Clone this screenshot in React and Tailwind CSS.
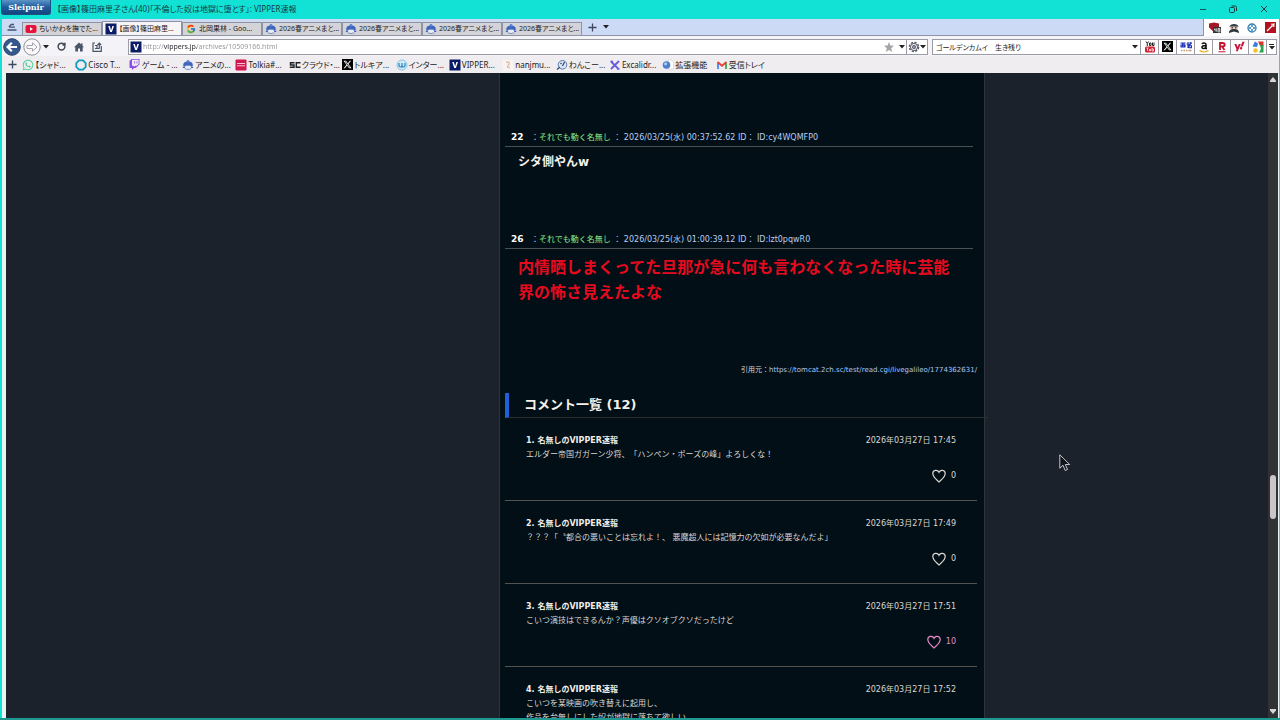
import React, { useState } from "react";
import { FaXTwitter, FaWhatsapp, FaTwitch, FaYahoo } from "react-icons/fa6";
import { FcGoogle } from "react-icons/fc";
import { RotateCw } from "lucide-react";

const TABS = [
  { icon: "youtube", title: "ちいかわを撫でた..." },
  { icon: "vipper", title: "【画像】篠田麻里...", active: true },
  { icon: "google", title: "北岡果林 - Goo..." },
  { icon: "anime", title: "2026春アニメまと..." },
  { icon: "anime", title: "2026春アニメまと..." },
  { icon: "anime", title: "2026春アニメまと..." },
  { icon: "anime", title: "2026春アニメまと..." },
];

const BOOKMARKS = [
  { icon: "whatsapp", title: "【シャド..." },
  { icon: "cisco", title: "Cisco T..." },
  { icon: "twitch", title: "ゲーム - ..." },
  { icon: "anime", title: "アニメの..." },
  { icon: "tolkia", title: "Tolkia#..." },
  { icon: "sc", title: "クラウド・..." },
  { icon: "x", title: "トルキア..." },
  { icon: "inter", title: "インター..." },
  { icon: "vipper", title: "VIPPER..." },
  { icon: "nanj", title: "nanjmu..." },
  { icon: "wanko", title: "わんこー..." },
  { icon: "excalidraw", title: "Excalidr..." },
  { icon: "globe", title: "拡張機能" },
  { icon: "gmail", title: "受信トレイ" },
];

const ENGINES = ["yt", "x", "kakaku", "amazon", "rakuten", "yahoo", "gsearch"];

const POSTS = [
  { no: 22, date: "2026/03/25(水) 00:37:52.62 ID： ID:cy4WQMFP0", text: "シタ側やんw" },
  {
    no: 26,
    date: "2026/03/25(水) 01:00:39.12 ID： ID:lzt0pqwR0",
    text: "内情晒しまくってた旦那が急に何も言わなくなった時に芸能界の怖さ見えたよな",
    big: true,
  },
];

const COMMENTS = [
  { id: 1, time: "17:45", likes: 0, lines: ["エルダー帝国ガガーン少将、「ハンペン・ポーズの峰」よろしくな！"] },
  { id: 2, time: "17:49", likes: 0, lines: ["？？？「〝都合の悪いことは忘れよ！、 悪魔超人には記憶力の欠如が必要なんだよ」"] },
  { id: 3, time: "17:51", likes: 10, lines: ["こいつ演技はできるんか？声優はクソオブクソだったけど"] },
  { id: 4, time: "17:52", likes: 0, lines: ["こいつを某映画の吹き替えに起用し、", "作品を台無しにした奴が地獄に落ちて欲しい"] },
];

const Icon = ({ name }) => {
  switch (name) {
    case "youtube":
      return (
        <svg viewBox="0 0 12 12" className="size-3 shrink-0">
          <rect x="0.5" y="2" width="11" height="8" rx="2" fill="#e8103c" />
          <path d="M5 4.2 8 6 5 7.8z" fill="#fff" />
        </svg>
      );
    case "vipper":
      return (
        <svg viewBox="0 0 12 12" className="size-3 shrink-0">
          <rect x="0.5" y="0.5" width="11" height="11" fill="#0b1c66" />
          <path d="M3.2 3h1.6L6.1 7.2 7.4 3H9L6.9 9H5.2z" fill="#fff" />
        </svg>
      );
    case "google":
      return <FcGoogle className="size-[10px] mx-px shrink-0" />;
    case "anime":
      return (
        <svg viewBox="0 0 12 12" className="size-3 shrink-0">
          <path d="M1.5 7.5C.3 3.8 3.4 2.6 6 2.6s5.7 1.2 4.5 4.9z" fill="#3f66bd" />
          <circle cx="6" cy="2.3" r="1.4" fill="#5b83d6" />
          <path d="M2.4 8.2c0-2.6 7.2-2.6 7.2 0 0 3-7.2 3-7.2 0z" fill="#e7ecf6" stroke="#5a7ab8" strokeWidth="0.8" />
          <path d="M.8 8.3h2M9.2 8.3h2" stroke="#3f66bd" strokeWidth="1.2" />
        </svg>
      );
    case "whatsapp":
      return <FaWhatsapp className="size-3 shrink-0 text-[#45cf95]" />;
    case "cisco":
      return (
        <svg viewBox="0 0 12 12" className="size-3 shrink-0">
          <path d="M4 1.3h4L10.7 4v4L8 10.7H4L1.3 8V4z" fill="none" stroke="#0f9bc4" strokeWidth="1.8" />
        </svg>
      );
    case "twitch":
      return <FaTwitch className="size-[11px] mr-px shrink-0 text-[#8d4ae8]" />;
    case "tolkia":
      return (
        <svg viewBox="0 0 12 12" className="size-3 shrink-0">
          <rect x="0.5" y="0.5" width="11" height="11" rx="1" fill="#d3174f" />
          <path d="M2 4.5h8M2 6.8h8" stroke="#f7c4d3" />
        </svg>
      );
    case "sc":
      return (
        <svg viewBox="0 0 12 12" className="size-3 shrink-0">
          <path d="M5.5 3.8H1.5V6H5v2.3H.8M11.5 3.8H7.3v4.5h4.2" fill="none" stroke="#222" strokeWidth="1.4" />
        </svg>
      );
    case "x":
      return (
        <span className="flex size-[11px] shrink-0 items-center justify-center bg-black text-white">
          <FaXTwitter className="size-[9px]" />
        </span>
      );
    case "inter":
      return (
        <svg viewBox="0 0 12 12" className="size-3 shrink-0">
          <circle cx="6" cy="6" r="5" fill="#d4ebf7" stroke="#8cc3e2" />
          <path d="M3 4v2.5c0 2 3 2 3 0V4v2.5c0 2 3 2 3 0V4" fill="none" stroke="#2483c0" strokeWidth="1.2" />
        </svg>
      );
    case "nanj":
      return (
        <svg viewBox="0 0 12 12" className="size-3 shrink-0">
          <rect x="0.5" y="0.5" width="11" height="11" fill="#f8f4f1" />
          <path d="M4 3.5c3-1.5 4 1 2.5 2.5S5 9 8 8.5" fill="none" stroke="#e5b79f" strokeWidth="1.3" />
        </svg>
      );
    case "wanko":
      return (
        <svg viewBox="0 0 12 12" className="size-3 shrink-0">
          <circle cx="6.5" cy="5.8" r="4.3" fill="#dbe6f7" stroke="#587ab3" />
          <path d="M1 10.5 4 8M8.5 3 6.5 7" stroke="#33456b" strokeWidth="1.2" />
          <circle cx="5" cy="4.5" r="0.8" fill="#33456b" />
        </svg>
      );
    case "excalidraw":
      return (
        <svg viewBox="0 0 12 12" className="size-3 shrink-0">
          <path d="M2 2.5 9.5 10M10 2 2 10" stroke="#6b5bdb" strokeWidth="1.8" />
          <path d="M1.5 2.2 4 2.5M8 9.8l2.5.2" stroke="#6b5bdb" strokeWidth="1.5" />
        </svg>
      );
    case "globe":
      return (
        <svg viewBox="0 0 12 12" className="size-3 shrink-0">
          <path d="M6 1h4l1.5 2v7H6z" fill="#fff" stroke="#c9cdd6" strokeWidth="0.6" />
          <circle cx="4.5" cy="6" r="3.8" fill="#4a7fd0" />
          <circle cx="3.6" cy="4.8" r="1.6" fill="#a9cbf4" />
        </svg>
      );
    case "gmail":
      return (
        <svg viewBox="0 0 12 12" className="size-3 shrink-0">
          <path d="M2 10V3.5" stroke="#4285f4" strokeWidth="1.8" />
          <path d="M10 10V3.5" stroke="#34a853" strokeWidth="1.8" />
          <path d="M1.5 3 6 6.8 10.5 3" fill="none" stroke="#ea4335" strokeWidth="1.9" />
        </svg>
      );
    default:
      return null;
  }
};

const EngineIcon = ({ name }) => {
  switch (name) {
    case "yt":
      return (
        <svg viewBox="0 0 12 12" className="size-3">
          <path d="M2 .5 3.3 2.5V5M4.6.5 3.3 2.5M5.5 2h1.5v2.5H5.5zM8.5 1.5v3h1.5v-3" fill="none" stroke="#222" />
          <rect x="1" y="5.5" width="10" height="6" rx="1.5" fill="#cf1f35" />
          <path d="M2.5 7h2M3.5 7v3M5.5 8v2h1V8M8 6.800V10h1.500V8H8" fill="none" stroke="#fff" strokeWidth="0.7" />
        </svg>
      );
    case "x":
      return <Icon name="x" />;
    case "kakaku":
      return (
        <svg viewBox="0 0 12 12" className="size-3">
          <path d="M.5 2h5M1 4h4v2H1zM2.500 2v4M4 2v4M8 1v6M6.500 3h3M9.500 1.500 11.500 2 9 4.500M9 4.800h2.500v2H9z" fill="none" stroke="#1c2fb5" strokeWidth="1.1" />
          <path d="M1 9.5h1.500M3.500 9.500H5M6 9.500h1.500M8.500 9.500h3" stroke="#c09a72" strokeWidth="1.5" />
        </svg>
      );
    case "amazon":
      return (
        <svg viewBox="0 0 12 12" className="size-3">
          <path d="M4 3c.5-1.500 4-1.500 4 .500V7.500l.8.500M8 4.500C5 4.500 3.800 5 4 6.500s3.500 1.500 4-.5" fill="none" stroke="#111" strokeWidth="1.6" />
          <path d="M1.5 9.5c3 2 6 2 9 0" fill="none" stroke="#eda723" strokeWidth="1.1" />
        </svg>
      );
    case "rakuten":
      return (
        <svg viewBox="0 0 12 12" className="size-3">
          <path d="M4 9V2h2.500c3 0 3 3.300 0 3.300H4M6 5.500 8.500 9" fill="none" stroke="#c4122f" strokeWidth="1.8" />
          <path d="M2.500 10.800h7" stroke="#c4122f" />
        </svg>
      );
    case "yahoo":
      return <FaYahoo className="size-[11px] text-[#c8163d]" />;
    case "gsearch":
      return (
        <svg viewBox="0 0 12 12" className="size-3">
          <rect x="0.5" y="0.5" width="11" height="11" fill="#fff" />
          <path d="M6 .5h5.500V5H8z" fill="#d9392b" />
          <path d="M8 4h3.500v7.500H7L9 8z" fill="#2ba24b" />
          <path d="M.5 5.500 3 .5l3 2-1 3.500z" fill="#3b78e0" />
          <circle cx="3.5" cy="9.500" r="2.200" fill="#f2c12e" />
        </svg>
      );
    default:
      return null;
  }
};

const Caret = () => (
  <svg viewBox="0 0 6 4" className="h-1 w-[6px] shrink-0">
    <path d="M0 0h6L3 3.500z" fill="#222" />
  </svg>
);

const Heart = () => (
  <svg viewBox="0 0 14 14" className="size-[14px]" fill="none" stroke="currentColor" strokeWidth="1.2">
    <path d="M7 13C4.500 10.500.8 8 .8 4.500.8 1 5.500.2 7 3.300 8.500.2 13.200 1 13.200 4.500 13.200 8 9.500 10.500 7 13z" />
  </svg>
);

const TitleBar = () => (
  <header className="flex h-[19px] shrink-0 items-start bg-[#12e2d6] text-[8px]">
    <button
      type="button"
      className="ml-px h-[15px] w-[50px] rounded-b-[3px] border border-t-0 border-[#1d4f80] bg-linear-to-b from-[#5b95c8] via-[#1f5c9b] to-[#164580] font-['DejaVu_Serif'] text-[8px] leading-[14px] font-bold text-white"
    >
      Sleipnir
    </button>
    <h1 className="ml-[6px] leading-[18px] text-[#143b45]">
      【画像】篠田麻里子さん(40)「不倫した奴は地獄に堕とす」: VIPPER速報
    </h1>
    <div className="ml-auto flex h-[18px] items-center">
      <button type="button" aria-label="最小化" className="flex w-[31px] justify-center">
        <svg viewBox="0 0 8 8" className="size-2" stroke="#15554f" fill="none"><path d="M1 4.500h6" /></svg>
      </button>
      <button type="button" aria-label="元に戻す" className="flex w-[30px] justify-center">
        <svg viewBox="0 0 8 8" className="size-2" stroke="#123c3a" fill="none">
          <rect x="0.5" y="2.5" width="5" height="5" rx="1" />
          <path d="M2.500 1h3.500c1 0 1.500.5 1.500 1.500V6" />
        </svg>
      </button>
      <button type="button" aria-label="閉じる" className="flex w-8 justify-center">
        <svg viewBox="0 0 8 8" className="size-2" stroke="#123c3a" fill="none"><path d="m1 1 6 6M7 1 1 7" /></svg>
      </button>
    </div>
  </header>
);

const TabBar = () => (
  <div className="flex h-[17px] shrink-0 bg-white">
    <nav className="flex flex-1 items-end border-r border-b border-[#8d94a3] bg-[#ccdaf6]">
      <button type="button" aria-label="タブ一覧" className="flex h-full w-5 items-center justify-center">
        <svg viewBox="0 0 10 10" className="size-[10px]" stroke="#44536e" strokeWidth="1.3" fill="none">
          <path d="M4 2.500h3M2 5.200h6M.5 8h9M4 2.500 2 5" />
        </svg>
      </button>
      {TABS.map((tab, i) => (
        <button
          key={i}
          type="button"
          className={
            tab.active
              ? "flex h-[14px] w-20 items-center gap-[2px] border border-b-0 border-[#8d94a3] bg-[#f6f4f7] pl-[2px] text-[#222]"
              : "flex h-[13px] w-20 items-center gap-[2px] border border-b-0 border-[#8d94a3] bg-[#d3d3d8] pl-[2px] text-[#222]"
          }
        >
          <Icon name={tab.icon} />
          <span className="text-[7px] leading-3 whitespace-nowrap">{tab.title}</span>
        </button>
      ))}
      <button type="button" aria-label="新しいタブ" className="ml-1 flex h-4 w-3 items-center justify-center">
        <svg viewBox="0 0 10 10" className="size-[9px]" stroke="#3d4760" strokeWidth="1.4"><path d="M5 .5v9M.5 5h9" /></svg>
      </button>
      <button type="button" aria-label="閉じたタブ" className="flex h-4 w-4 items-center justify-center">
        <Caret />
      </button>
    </nav>
    <div className="flex items-center gap-2 pr-[3px] pl-[5px]">
      <button type="button" aria-label="ブロッカー">
        <svg viewBox="0 0 12 12" className="size-3">
          <path d="M0 1.500 5 .5l5 1v4L5 10 0 5.500z" fill="#a31824" />
          <rect x="4" y="5" width="8" height="6" fill="#333" />
          <path d="M5.500 6.500v1.500h2M7.200 6.200V10M9 6.500h1.800V10H9zM9 8h2" stroke="#fff" strokeWidth="0.7" fill="none" />
        </svg>
      </button>
      <button type="button" aria-label="忍者">
        <svg viewBox="0 0 10 10" className="size-[10px]">
          <path d="M.5 4C.5 0 9.500 0 9.500 4z" fill="#333f48" />
          <rect x="1" y="3.500" width="8" height="3" fill="#e3cbbd" />
          <path d="M0 10c0-3 2-4 5-4s5 1 5 4L5 8.500z" fill="#2c353c" />
          <path d="M2.500 4.800h1.500M6 4.800h1.500" stroke="#111" />
        </svg>
      </button>
      <button type="button" aria-label="スクロール">
        <svg viewBox="0 0 10 10" className="size-[10px]" fill="none" stroke="#2a7db5">
          <circle cx="5" cy="5" r="4" strokeWidth="1.300" />
          <path d="M5 2v2M5 6v2M2 5h2M6 5h2" strokeWidth="1.400" />
        </svg>
      </button>
      <button type="button" aria-label="ツール">
        <svg viewBox="0 0 11 11" className="size-[11px]">
          <rect width="11" height="11" fill="#b3101d" />
          <path d="m2 9 5-5M7 1.500v2M9.500 4h-2M8 3l1.500-1.500" stroke="#fff" strokeWidth="1.300" />
        </svg>
      </button>
    </div>
  </div>
);

const AddressBar = () => {
  const [url, setUrl] = useState("http://vippers.jp/archives/10509166.html");
  const [query, setQuery] = useState("ゴールデンカムイ　生き残り");

  return (
    <div className="flex h-5 shrink-0 items-center bg-[#f4f3f7] pt-px pr-[2px]">
      <div className="flex w-[126px] items-center pl-px">
        <button type="button" aria-label="戻る">
          <svg viewBox="0 0 18 18" className="size-[18px]">
            <circle cx="9" cy="9" r="8.300" fill="#35588f" stroke="#263f68" />
            <path d="M14 9H5M8.800 4.800 4.600 9l4.200 4.200" fill="none" stroke="#fff" strokeWidth="2.200" />
          </svg>
        </button>
        <button type="button" aria-label="進む" className="ml-[2px]">
          <svg viewBox="0 0 18 18" className="size-[18px]">
            <circle cx="9" cy="9" r="8.200" fill="#f9f9fb" stroke="#8d8f96" />
            <path d="M4 7.500h5.500V4.800L14 9l-4.500 4.200v-2.700H4z" fill="#fff" stroke="#a3a5ab" />
          </svg>
        </button>
        <button type="button" aria-label="履歴" className="ml-[2px]">
          <Caret />
        </button>
        <button type="button" aria-label="更新" className="ml-2 text-[#444b57]">
          <RotateCw className="size-[9px]" strokeWidth={4} />
        </button>
        <button type="button" aria-label="ホーム" className="ml-2">
          <svg viewBox="0 0 10 10" className="size-[10px]" fill="#4b5568">
            <path d="M5 .5 0 5.300h1.300V9.500h2.700V6.500h2v3h2.700V5.300H10L8.500 3.800V1.200H7.200v1.400z" />
          </svg>
        </button>
        <button type="button" aria-label="フィード" className="ml-2">
          <svg viewBox="0 0 10 10" className="size-[10px]" fill="none" stroke="#4b5568" strokeWidth="1.200">
            <path d="M3 1H1v8.300h8.300V4M3 3.500h2v3M3 6.500h4.500M7.300 6.500V1.500M5.500 3 7.300 1.200 9.200 3" />
          </svg>
        </button>
      </div>

      <div className="flex h-4 flex-1 items-center border border-[#9b9ba3] bg-white">
        <span className="mx-px flex"><Icon name="vipper" /></span>
        <input
          type="text"
          aria-label="アドレス"
          value={url}
          onChange={(e) => setUrl(e.target.value)}
          className="h-[14px] min-w-0 flex-1 bg-[linear-gradient(90deg,#92929a_21px,#26262c_21px,#26262c_54px,#92929a_54px)] bg-clip-text text-[7px] text-transparent outline-none"
        />
        <button type="button" aria-label="お気に入り" className="mr-[5px]">
          <svg viewBox="0 0 10 10" className="size-[10px]" fill="#a4a4aa">
            <path d="m5 0 1.400 3.500L10 3.800 7.200 6.200 8.200 10 5 7.900 1.800 10l1-3.800L0 3.800l3.600-.3z" />
          </svg>
        </button>
        <button type="button" aria-label="お気に入りメニュー" className="mr-px"><Caret /></button>
        <button type="button" aria-label="設定" className="flex h-full items-center border-l border-[#9b9ba3] px-px">
          <svg viewBox="0 0 12 12" className="size-3" fill="none" stroke="#4e5562">
            <circle cx="6" cy="6" r="4.600" strokeWidth="1.400" strokeDasharray="2.200 1.400" />
            <circle cx="6" cy="6" r="3.500" />
            <circle cx="6" cy="6" r="1.300" strokeWidth="1.300" />
          </svg>
          <Caret />
        </button>
      </div>

      <div className="ml-1 flex h-4 w-[209px] items-center border border-[#9b9ba3] bg-white pr-[2px] pl-[3px]">
        <input
          type="text"
          aria-label="検索"
          value={query}
          onChange={(e) => setQuery(e.target.value)}
          className="h-[14px] min-w-0 flex-1 text-[7px] text-[#222] outline-none"
        />
        <button type="button" aria-label="検索履歴"><Caret /></button>
      </div>
      {ENGINES.map((name) => (
        <button
          key={name}
          type="button"
          aria-label={name}
          className="flex h-4 w-[18px] items-center justify-center border-y border-r border-[#9b9ba3] bg-white"
        >
          <EngineIcon name={name} />
        </button>
      ))}
      <button type="button" aria-label="検索エンジン" className="flex h-4 w-[10px] flex-col items-center justify-center gap-px border-y border-r border-[#9b9ba3] bg-white">
        <span className="h-px w-[5px] bg-[#222]" />
        <Caret />
      </button>
    </div>
  );
};

const BookmarkBar = () => (
  <nav className="flex h-[17px] shrink-0 items-center bg-[#f0edf0]">
    <button type="button" aria-label="ブックマーク追加" className="flex w-5 justify-center">
      <svg viewBox="0 0 10 10" className="size-[9px]" stroke="#3d4760" strokeWidth="1.500"><path d="M5 .5v9M.5 5h9" /></svg>
    </button>
    <div className="grid w-[747px] grid-cols-14">
      {BOOKMARKS.map((b) => (
        <a key={b.title} href="#" className="flex items-center gap-px text-[8px] leading-3 whitespace-nowrap text-[#222]">
          <Icon name={b.icon} />
          {b.title}
        </a>
      ))}
    </div>
  </nav>
);

const Post = ({ post }) => (
  <article className="mr-1 pb-[60px]">
    <header className="flex h-[18px] items-center border-b border-[#4b5054] pl-[6px] text-[#b9cdf0]">
      <span className="w-5 text-[9px] font-bold text-white">{post.no}</span>
      <span>
        ：<span className="text-[#8df08d]">それでも動く名無し</span> ： {post.date}
      </span>
    </header>
    <p
      className={
        post.big
          ? "mt-[6px] pr-2 pl-[13px] text-[16px] leading-[25px] font-bold text-[#e60a1e]"
          : "mt-[6px] pl-[13px] text-[12px] leading-[18px] font-bold text-[#f5f1ea]"
      }
    >
      {post.text}
    </p>
  </article>
);

const Comment = ({ comment }) => (
  <li className="border-b border-[#55534f] px-[21px] pt-4 pb-[17px] leading-[14px] text-[#dcd8d2]">
    <div className="flex justify-between">
      <b className="text-[#f0ede8]">{comment.id}. 名無しのVIPPER速報</b>
      <time>2026年03月27日 {comment.time}</time>
    </div>
    {comment.lines.map((line) => (
      <p key={line}>{line}</p>
    ))}
    <button
      type="button"
      className={
        comment.likes > 0
          ? "mt-[7px] ml-auto flex items-center gap-[5px] text-[#e58cc6]"
          : "mt-[7px] ml-auto flex items-center gap-[5px] text-[#dcd8d2]"
      }
    >
      <Heart />
      {comment.likes}
    </button>
  </li>
);

const Scrollbar = () => (
  <div className="flex w-[10px] shrink-0 flex-col items-center bg-[#303234] py-1">
    <svg viewBox="0 0 6 5" className="h-[5px] w-[6px]"><path d="M3 0 6 3.500V5H0V3.500z" fill="#d8d4d6" /></svg>
    <div className="flex-[393]" />
    <div className="w-[6px] flex-[44] rounded-[3px] bg-[#cac6c8]" />
    <div className="flex-[190]" />
    <svg viewBox="0 0 6 5" className="h-[5px] w-[6px]"><path d="M3 5 0 1.500V0h6v1.500z" fill="#d8d4d6" /></svg>
  </div>
);

export default function App() {
  return (
    <div className="relative flex h-screen flex-col overflow-hidden border-b-2 border-[#1f998f] bg-[#12e2d6] font-['Noto_Sans','Noto_Sans_CJK_JP',sans-serif]">
      {/* browser chrome */}
      <div className="flex flex-col [font-feature-settings:'palt']">
        <TitleBar />
        <div className="mr-px ml-[2px] flex flex-col">
          <TabBar />
          <AddressBar />
          <BookmarkBar />
        </div>
      </div>

      {/* page */}
      <div className="mr-px ml-[2px] flex min-h-0 flex-1 border-r border-l-4 border-[#e8f3f5] bg-[#1b222c] font-['DejaVu_Sans','Noto_Sans_CJK_JP',sans-serif] text-[8px] [text-spacing-trim:space-all]">
        <div className="flex-[493]" />
        <main className="h-full w-[486px] shrink-0 overflow-visible border-x border-[#2d343c] bg-[#020f17] pt-14 pr-[7px] pl-[5px]">
          {POSTS.map((post) => (
            <Post key={post.no} post={post} />
          ))}
          <p className="text-right text-[7px] leading-[10px] text-[#dcd8d2]">
            引用元：
            <a href="#" className="text-[#a9c8f5]">
              https://tomcat.2ch.sc/test/read.cgi/livegalileo/1774362631/
            </a>
          </p>
          <h2 className="mt-[18px] -mr-[11px] border-b border-l-4 border-b-[#2d3032] border-l-[#1f5fd8] pl-[15px] text-[13px] leading-6 font-bold text-[#f5f1ea]">
            コメント一覧 (12)
          </h2>
          <ul>
            {COMMENTS.map((c) => (
              <Comment key={c.id} comment={c} />
            ))}
          </ul>
        </main>
        <div className="flex-[283]" />
        <Scrollbar />
      </div>

      {/* mouse pointer */}
      <svg viewBox="0 0 12 18" className="absolute top-[454px] left-[1059px] h-[18px] w-3">
        <path d="M.8.8v13.400l3.200-3 2.200 5.300 2.300-1-2.200-5h4.400z" fill="#10151c" stroke="#d5d8dc" strokeWidth="0.900" />
      </svg>
    </div>
  );
}
